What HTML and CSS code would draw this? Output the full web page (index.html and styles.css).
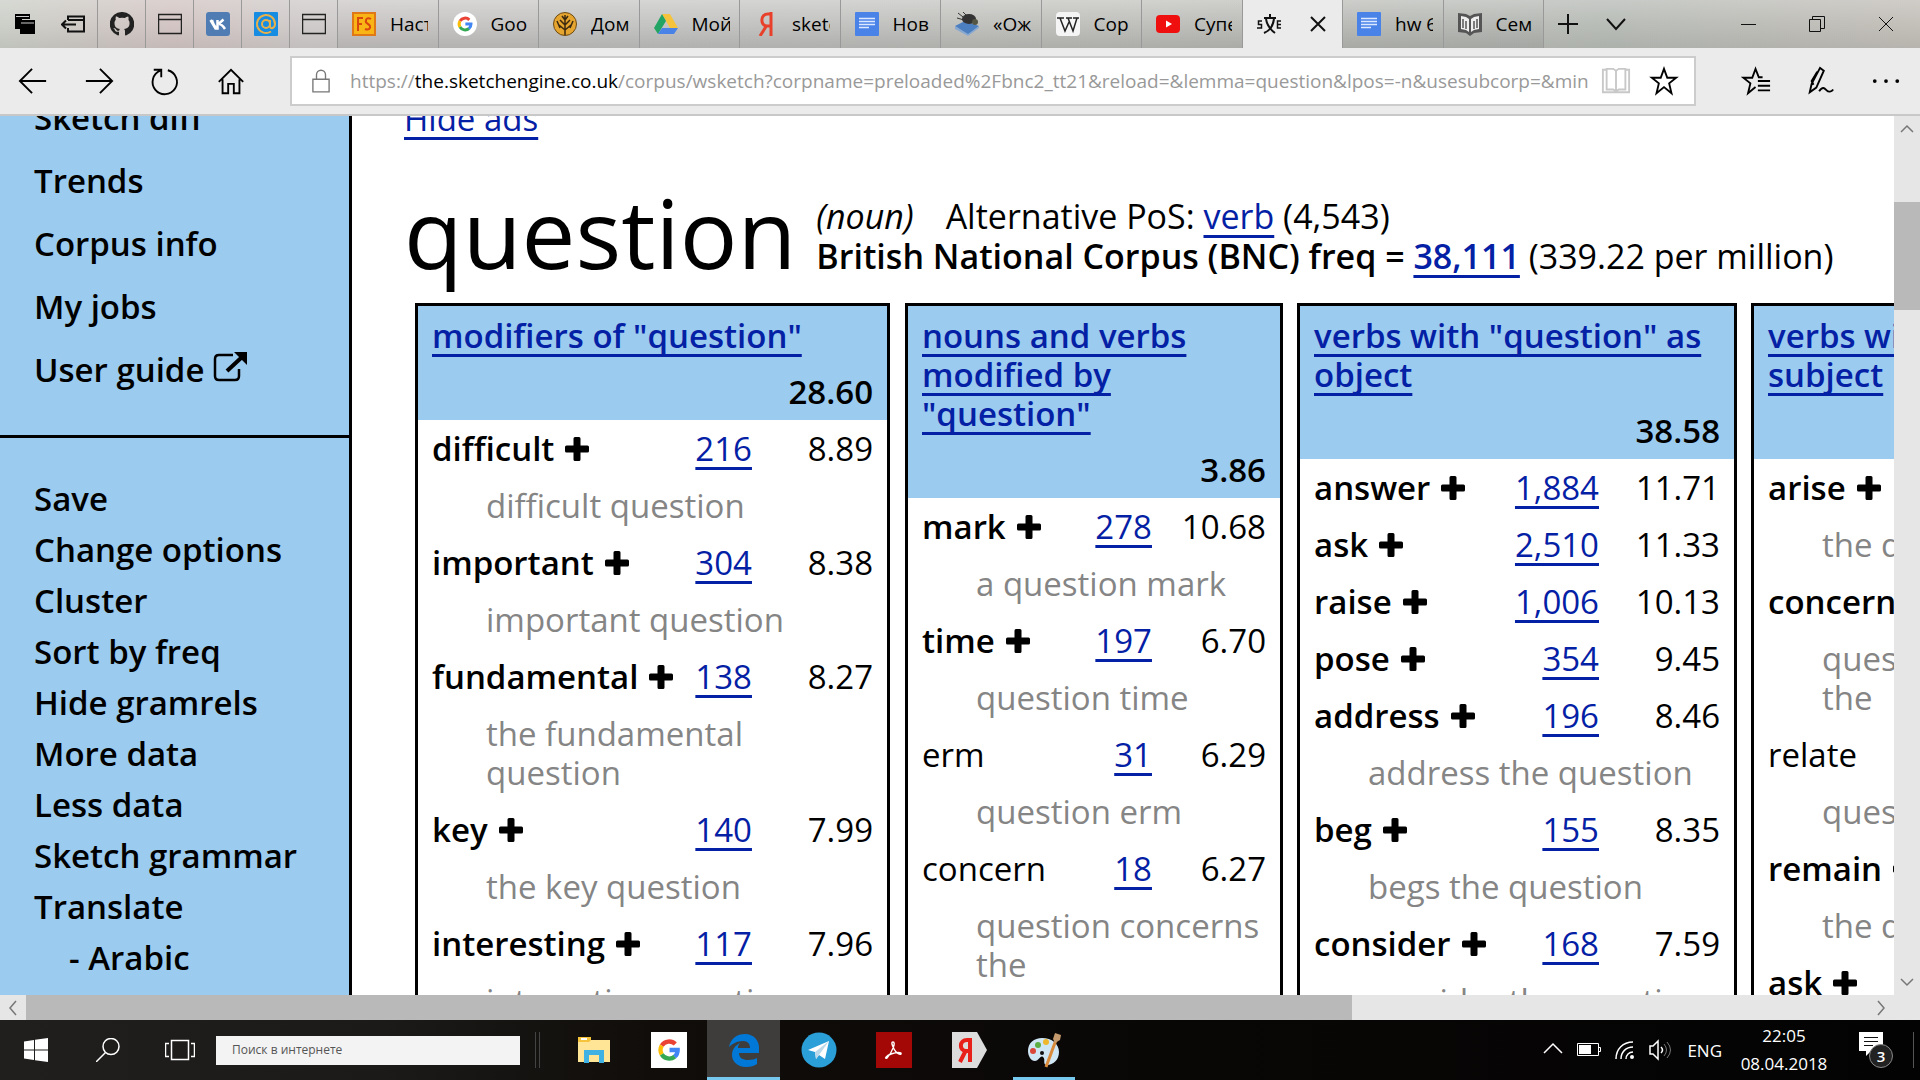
FILE: index.html
```html
<!DOCTYPE html>
<html lang="en">
<head>
<meta charset="utf-8">
<title>Word sketch: question</title>
<link rel="stylesheet" href="styles.css">
</head>
<body>
<svg class="defs" aria-hidden="true">
  <symbol id="plus" viewBox="0 0 24 24"><path d="M8.500 1.500q0-1.500 1.500-1.500h4q1.500 0 1.500 1.500V8.500h7q1.500 0 1.500 1.500v4q0 1.500-1.500 1.500h-7v7q0 1.500-1.500 1.500h-4Q8.500 24 8.500 22.500v-7h-7Q0 15.500 0 14v-4Q0 8.500 1.500 8.500h7z"/></symbol>
  <symbol id="window" viewBox="0 0 24 24"><path d="M.5 2.500h23v19H.5zM.5 7.500h23" fill="none" stroke="#222" stroke-width="1.500"/></symbol>
  <symbol id="doc" viewBox="0 0 24 24"><rect width="24" height="24" rx="1" fill="#4a83e8"/><path d="M4 6.500h16M4 9.500h16M4 12.500h16M4 15.500h10" stroke="#dce8ff" stroke-width="1.600"/></symbol>
  <symbol id="google" viewBox="0 0 24 24"><g fill="none" stroke-width="4"><path d="M5.300 8A8 8 0 0 1 17.800 6.500" stroke="#ea4335"/><path d="M5.300 16A8 8 0 0 1 5.300 8" stroke="#fbbc05"/><path d="M17.400 18A8 8 0 0 1 5.300 16" stroke="#34a853"/><path d="M12.500 12h7.500a8 8 0 0 1-2.800 6.200" stroke="#4285f4"/></g></symbol>
</svg>

<header class="tabbar">
  <div class="tabtools">
    <button class="ico" aria-label="Tabs set aside"><svg viewBox="0 0 24 24"><path d="M1 2h15v5H8v10H1z"/><path d="M6 8h15v14H6z"/><path d="M2 4.500h13M7 11h13" stroke="#ccc" stroke-width="1"/></svg></button>
    <button class="ico" aria-label="Set tabs aside"><svg viewBox="0 0 24 24" class="line"><path d="M7 8V4.500h16v15H7V16M7 8h16M15 12.500H1M5 8.500l-4 4 4 4"/></svg></button>
  </div>
  <button class="pin" aria-label="GitHub"><svg viewBox="0 0 24 24"><path fill="#222" d="M12 0a12 12 0 0 0-4 23.400c.7.100 1-.3 1-.7v-3c-3 .6-4-1-4.300-2-.3-.6-1-1.300-1.500-1.600 1.800-.4 2.800 1 3.300 1.800.8 1.100 2 1 2.700.6.100-.8.500-1.300.8-1.500-3-.4-5.500-1.500-5.500-6 0-1.300.5-2.400 1.300-3.200-.3-.9-.3-2 .1-3.200 1.300 0 2.500.7 3.400 1.400a12 12 0 0 1 5.600 0c.9-.7 2.100-1.300 3.300-1.400.5 1.200.5 2.300.2 3.200.8.800 1.200 1.900 1.200 3.200 0 4.500-2.600 5.600-5.500 6 .5.400.9 1.200.9 2.400v3.300c0 .4.300.8 1 .7A12 12 0 0 0 12 0z"/></svg></button>
  <button class="pin" aria-label="Pinned page"><svg><use href="#window"/></svg></button>
  <button class="pin" aria-label="VK"><svg viewBox="0 0 24 24"><rect width="24" height="24" rx="3" fill="#4f7db3"/><path d="M4.500 8l5 8.500h2V8M6 8c1 4 3 7 5 8M12.500 12l5-4.500M13 12c2 0 4 2 6 5" fill="none" stroke="#fff" stroke-width="2.500"/></svg></button>
  <button class="pin" aria-label="Mail"><svg viewBox="0 0 24 24"><rect width="24" height="24" rx="1" fill="#168de2"/><g fill="none" stroke="#e8b04a" stroke-width="2"><circle cx="12" cy="12" r="4"/><path d="M16 8v6c0 4 5 2 5-2a9 9 0 1 0-4 7.500"/></g></svg></button>
  <button class="pin" aria-label="Pinned page"><svg><use href="#window"/></svg></button>
  <div class="tabs">
    <button class="tab"><svg viewBox="0 0 24 24"><rect x="1" y="1" width="22" height="22" fill="#f9b515" stroke="#e07818" stroke-width="2"/><path d="M6 19V6h5M6 12h4M19 7c-5-3-7 3-3 5s2 7-3 5" fill="none" stroke="#d9480f" stroke-width="2"/></svg><span>Наст</span></button>
    <button class="tab"><svg viewBox="0 0 24 24"><circle cx="12" cy="12" r="12" fill="#fff"/><use href="#google" x="3" y="3" width="18" height="18"/></svg><span>Goo</span></button>
    <button class="tab"><svg viewBox="0 0 24 24"><circle cx="12" cy="12" r="11.500" fill="#e5a52e" stroke="#6b4a15"/><path d="M12 23V3M12 18l-6-5M12 18l6-5M12 13L7 8M12 13l5-5M12 8L9 4M12 8l3-4M4 9l3 7M20 9l-3 7" fill="none" stroke="#3c2a10" stroke-width="1.500"/></svg><span>Дом</span></button>
    <button class="tab"><svg viewBox="0 0 24 24"><path d="M8 2h8l8 14h-8z" fill="#f6c33c"/><path d="M8 2l4 7-8 13-4-6z" fill="#21a464"/><path d="M8 16h16l-4 6H4z" fill="#4a83e8"/></svg><span>Мой</span></button>
    <button class="tab"><svg viewBox="0 0 24 24"><path d="M17 0v24M17 2h-3c-8 0-8 12-1 12h4M13 13L6 24" fill="none" stroke="#e8402a" stroke-width="3"/></svg><span>sketc</span></button>
    <button class="tab"><svg><use href="#doc"/></svg><span>Нов</span></button>
    <button class="tab"><svg viewBox="0 0 24 24"><path d="M0 14l10-5 14 5-11 9z" fill="#4b7fc0"/><path d="M0 14v3l13 7 11-8v-2l-11 8z" fill="#88a8cf"/><ellipse cx="14" cy="7" rx="7" ry="5" fill="#333"/><circle cx="20" cy="10" r="3" fill="#554"/><path d="M8 5L3 1M9 8L2 6M11 3L8 0" stroke="#333"/></svg><span>«Ож</span></button>
    <button class="tab"><svg viewBox="0 0 24 24"><rect width="24" height="24" rx="4" fill="#f5f5f5"/><path d="M1 6h7M10 6h6M17 6h6M4 6l5 13 4-9M12 6l5 13 4-13" fill="none" stroke="#222" stroke-width="1.500"/></svg><span>Cop</span></button>
    <button class="tab"><svg viewBox="0 0 24 24"><rect y="3" width="24" height="18" rx="4" fill="#f00f0f"/><path d="M10 8.500v7l6-3.500z" fill="#fff"/></svg><span>Супе</span></button>
    <div class="tab active"><svg viewBox="0 0 24 24" class="line"><path d="M13 2v4M7 6h12M9 7c1 6 5 11 9 14M17 7c-1 7-5 12-10 14" stroke-width="2"/><path d="M5 9H1.500v3.500h3V16H0M24 9h-3.500v7H24M20.500 12.500H24" stroke-width="1.500"/></svg><button class="close" aria-label="Close tab"><svg viewBox="0 0 16 16" class="line"><path d="M1 1l14 14M15 1L1 15"/></svg></button></div>
    <button class="tab"><svg><use href="#doc"/></svg><span>hw 6</span></button>
    <button class="tab"><svg viewBox="0 0 24 24"><path d="M0 1l8 1 4 2 4-2 8-1v19l-8 1-4 3-4-3-8-1z" fill="#555"/><path d="M3 4l5 1 3 2v13l-3-2-5-1zM21 4l-5 1-3 2v13l3-2 5-1z" fill="#eee"/><path d="M5 7v9M8 9v8M16 9v8M19 7v9" stroke="#555" stroke-width="1.500"/></svg><span>Сем</span></button>
  </div>
  <button class="pin plain" aria-label="New tab"><svg viewBox="0 0 24 24" class="line"><path d="M12 2v20M2 12h20"/></svg></button>
  <button class="pin plain" aria-label="Tab previews"><svg viewBox="0 0 24 24" class="line"><path d="M3 7l9 10 9-10"/></svg></button>
  <div class="wincontrols">
    <button aria-label="Minimize"><svg viewBox="0 0 16 16" class="thin"><path d="M1 8.500h15"/></svg></button>
    <button aria-label="Restore"><svg viewBox="0 0 16 16" class="thin"><path d="M.5 3.500h11v12H.5zM3.500 3.500v-3h12v12h-4"/></svg></button>
    <button aria-label="Close"><svg viewBox="0 0 16 16" class="thin"><path d="M1 1l14 14M15 1L1 15"/></svg></button>
  </div>
</header>

<nav class="toolbar" aria-label="Browser">
  <button aria-label="Back"><svg viewBox="0 0 32 32" class="nav"><path d="M30 16H2M15 3L2 16l13 13"/></svg></button>
  <button aria-label="Forward"><svg viewBox="0 0 32 32" class="nav"><path d="M2 16h28M17 3l13 13-13 13"/></svg></button>
  <button aria-label="Refresh"><svg viewBox="0 0 32 32" class="nav"><path d="M19 4.500a13 13 0 1 1-8 .5M4 4h8v8"/></svg></button>
  <button aria-label="Home"><svg viewBox="0 0 32 32" class="nav"><path d="M3 17L16 4l13 13M7 14v15h6V19h6v10h6V14"/></svg></button>
  <div class="address">
    <svg class="lock" viewBox="0 0 20 28" aria-hidden="true"><path d="M1 12h18v14H1zM5 12V7a5 5 0 0 1 10 0v5" fill="none" stroke="#777" stroke-width="1.500"/></svg>
    <div class="url" role="textbox" aria-label="Address">https://<b>the.sketchengine.co.uk</b>/corpus/wsketch?corpname=preloaded%2Fbnc2_tt21&amp;reload=&amp;lemma=question&amp;lpos=-n&amp;usesubcorp=&amp;minfr</div>
    <button aria-label="Reading view"><svg viewBox="0 0 32 32"><path d="M2 4h4v-1h7l3 2 3-2h7v1h4v24H2zM6 4v21h7l3 2 3-2h7V4M16 5v22" fill="none" stroke="#c8c8c8" stroke-width="2"/></svg></button>
    <button aria-label="Add to favorites"><svg viewBox="0 0 32 32" class="nav"><path d="M16 3l3.500 9.500H29l-7.500 6L24 29l-8-6.500L8 29l2.500-10.500-7.500-6h9.500z"/></svg></button>
  </div>
  <div class="actions">
    <button aria-label="Hub"><svg viewBox="0 0 32 32" class="nav"><path d="M23 12h-4L15.500 3 12 12.500H2.500l7.500 6L7.500 29l8-6.500M18 16h13M18 21h13M18 26h13"/></svg></button>
    <button aria-label="Notes"><svg viewBox="0 0 32 32" class="nav"><path d="M4 28l2-9L15 2l4 3-8 18zM8 20l-2-4 6-10M14 27c4-6 6-3 8-1s5 2 7-1"/></svg></button>
    <button aria-label="More"><svg viewBox="0 0 32 32"><circle cx="4" cy="16" r="2"/><circle cx="16" cy="16" r="2"/><circle cx="28" cy="16" r="2"/></svg></button>
  </div>
</nav>

<div class="viewport">
  <div class="page">
    <aside class="sidebar">
      <ul class="menu tall">
        <li><a href="#">Sketch diff</a></li>
        <li><a href="#">Trends</a></li>
        <li><a href="#">Corpus info</a></li>
        <li><a href="#">My jobs</a></li>
        <li><a href="#">User guide <svg class="ext" viewBox="0 0 34 30"><path d="M20 3H6Q2 3 2 7v17q0 4 4 4h16q4 0 4-4v-7" fill="none" stroke="#000" stroke-width="2.500"/><path d="M14 19L28 6" stroke="#000" stroke-width="4"/><path d="M21 0h13v13z"/></svg></a></li>
      </ul>
      <ul class="menu">
        <li><a href="#">Save</a></li>
        <li><a href="#">Change options</a></li>
        <li><a href="#">Cluster</a></li>
        <li><a href="#">Sort by freq</a></li>
        <li><a href="#">Hide gramrels</a></li>
        <li><a href="#">More data</a></li>
        <li><a href="#">Less data</a></li>
        <li><a href="#">Sketch grammar</a></li>
        <li><a href="#">Translate</a></li>
        <li class="sub"><a href="#">- Arabic</a></li>
      </ul>
    </aside>
    <main class="content">
      <a class="hide" href="#">Hide ads</a>
      <div class="lemma">
        <h1>question</h1>
        <p><i>(noun)</i><span class="alt">Alternative PoS: <a href="#">verb</a> (4,543)</span><br>
        <b>British National Corpus (BNC) freq = <a href="#">38,111</a></b> (339.22 per million)</p>
      </div>
      <div class="sketches">
        <table class="w1">
          <colgroup><col><col class="freq"><col class="score"></colgroup>
          <thead><tr><th colspan="3"><a href="#">modifiers of "question"</a></th></tr><tr><td colspan="3">28.60</td></tr></thead>
          <tbody>
          <tr><td><b>difficult</b><svg><use href="#plus"/></svg></td><td><a href="#">216</a></td><td>8.89</td></tr>
          <tr class="ex"><td colspan="3">difficult question</td></tr>
          <tr><td><b>important</b><svg><use href="#plus"/></svg></td><td><a href="#">304</a></td><td>8.38</td></tr>
          <tr class="ex"><td colspan="3">important question</td></tr>
          <tr><td><b>fundamental</b><svg><use href="#plus"/></svg></td><td><a href="#">138</a></td><td>8.27</td></tr>
          <tr class="ex"><td colspan="3">the fundamental<br>question</td></tr>
          <tr><td><b>key</b><svg><use href="#plus"/></svg></td><td><a href="#">140</a></td><td>7.99</td></tr>
          <tr class="ex"><td colspan="3">the key question</td></tr>
          <tr><td><b>interesting</b><svg><use href="#plus"/></svg></td><td><a href="#">117</a></td><td>7.96</td></tr>
          <tr class="ex"><td colspan="3">interesting question</td></tr>
          </tbody>
        </table>
        <table class="w2">
          <colgroup><col><col class="freq"><col class="score"></colgroup>
          <thead><tr><th colspan="3"><a href="#">nouns and verbs<br>modified by<br>"question"</a></th></tr><tr><td colspan="3">3.86</td></tr></thead>
          <tbody>
          <tr><td><b>mark</b><svg><use href="#plus"/></svg></td><td><a href="#">278</a></td><td>10.68</td></tr>
          <tr class="ex"><td colspan="3">a question mark</td></tr>
          <tr><td><b>time</b><svg><use href="#plus"/></svg></td><td><a href="#">197</a></td><td>6.70</td></tr>
          <tr class="ex"><td colspan="3">question time</td></tr>
          <tr><td>erm</td><td><a href="#">31</a></td><td>6.29</td></tr>
          <tr class="ex"><td colspan="3">question erm</td></tr>
          <tr><td>concern</td><td><a href="#">18</a></td><td>6.27</td></tr>
          <tr class="ex"><td colspan="3">question concerns<br>the</td></tr>
          <tr><td colspan="3">&nbsp;</td></tr>
          </tbody>
        </table>
        <table class="w3">
          <colgroup><col><col class="freq"><col class="score"></colgroup>
          <thead><tr><th colspan="3"><a href="#">verbs with "question" as<br>object</a></th></tr><tr><td colspan="3">38.58</td></tr></thead>
          <tbody>
          <tr><td><b>answer</b><svg><use href="#plus"/></svg></td><td><a href="#">1,884</a></td><td>11.71</td></tr>
          <tr><td><b>ask</b><svg><use href="#plus"/></svg></td><td><a href="#">2,510</a></td><td>11.33</td></tr>
          <tr><td><b>raise</b><svg><use href="#plus"/></svg></td><td><a href="#">1,006</a></td><td>10.13</td></tr>
          <tr><td><b>pose</b><svg><use href="#plus"/></svg></td><td><a href="#">354</a></td><td>9.45</td></tr>
          <tr><td><b>address</b><svg><use href="#plus"/></svg></td><td><a href="#">196</a></td><td>8.46</td></tr>
          <tr class="ex"><td colspan="3">address the question</td></tr>
          <tr><td><b>beg</b><svg><use href="#plus"/></svg></td><td><a href="#">155</a></td><td>8.35</td></tr>
          <tr class="ex"><td colspan="3">begs the question</td></tr>
          <tr><td><b>consider</b><svg><use href="#plus"/></svg></td><td><a href="#">168</a></td><td>7.59</td></tr>
          <tr class="ex"><td colspan="3">consider the question</td></tr>
          </tbody>
        </table>
        <table class="w3">
          <colgroup><col><col class="freq"><col class="score"></colgroup>
          <thead><tr><th colspan="3"><a href="#">verbs with "question" as<br>subject</a></th></tr><tr><td colspan="3">&nbsp;</td></tr></thead>
          <tbody>
          <tr><td><b>arise</b><svg><use href="#plus"/></svg></td><td></td><td></td></tr>
          <tr class="ex"><td colspan="3">the question</td></tr>
          <tr><td><b>concern</b><svg><use href="#plus"/></svg></td><td></td><td></td></tr>
          <tr class="ex"><td colspan="3">question<br>the</td></tr>
          <tr><td>relate</td><td></td><td></td></tr>
          <tr class="ex"><td colspan="3">question</td></tr>
          <tr><td><b>remain</b><svg><use href="#plus"/></svg></td><td></td><td></td></tr>
          <tr class="ex"><td colspan="3">the question</td></tr>
          <tr><td><b>ask</b><svg><use href="#plus"/></svg></td><td></td><td></td></tr>
          </tbody>
        </table>
      </div>
    </main>
  </div>
  <div class="vscroll">
    <button aria-label="Scroll up"><svg viewBox="0 0 16 16"><path d="M2 11l6-6 6 6"/></svg></button>
    <div class="track"><div class="thumb"></div></div>
    <button aria-label="Scroll down"><svg viewBox="0 0 16 16"><path d="M2 5l6 6 6-6"/></svg></button>
  </div>
</div>
<div class="hscroll">
  <button aria-label="Scroll left"><svg viewBox="0 0 16 16"><path d="M11 1L5 8l6 7"/></svg></button>
  <div class="track"><div class="thumb"></div></div>
  <button aria-label="Scroll right"><svg viewBox="0 0 16 16"><path d="M5 1l6 7-6 7"/></svg></button>
</div>

<footer class="taskbar">
  <button class="sys" aria-label="Start"><svg viewBox="0 0 24 24"><path d="M0 3.500L10 2v9.500H0zM11 1.800L24 0v11.500H11zM0 12.500h10V22L0 20.500zM11 12.500h13V24l-13-1.800z" fill="#fff"/></svg></button>
  <button class="sys" aria-label="Search"><svg viewBox="0 0 24 24" class="white"><circle cx="15" cy="8.500" r="8"/><path d="M9.500 14.500L0 24"/></svg></button>
  <button class="sys" aria-label="Task view"><svg class="wide" viewBox="0 0 30 24" ><g class="white"><path d="M6.500 2.500h17v19h-17zM4 5.500H.5v13H4M26 5.500h3.500v13H26"/></g></svg></button>
  <input class="search" type="text" placeholder="Поиск в интернете" aria-label="Поиск в интернете">
  <i class="grip"></i>
  <div class="apps">
    <button aria-label="Explorer"><svg viewBox="0 0 36 36"><path d="M2 5h13v3h19v22H2z" fill="#ffe595"/><path d="M2 5h13v3l-2 2H2z" fill="#f6c33c"/><path d="M5 6h6v2H5z" fill="#fff"/><path d="M8 31V18h20v13h-5v-8H13v8z" fill="#3fb1e3"/></svg></button>
    <button aria-label="Google"><svg viewBox="0 0 36 36"><rect width="36" height="36" fill="#fff"/><use href="#google" x="5" y="5" width="26" height="26"/></svg></button>
    <button class="on" aria-label="Edge"><svg viewBox="0 0 36 36"><path d="M3 15C5 6 11 2 19 2c9 0 14 7 14 13v6H13c0 5 4 7 9 7 4 0 7-1 9-2v6c-3 2-6 3-11 3C11 35 6 29 6 23c0-6 4-10 8-12-2 2-2 4-2 5h12c0-4-2-7-7-7-6 0-11 3-14 6z" fill="#0078d7"/></svg></button>
    <button aria-label="Telegram"><svg viewBox="0 0 36 36"><circle cx="18" cy="18" r="17.500" fill="#2a9fd8"/><path d="M7 18L28 9l-4 18-6-4-3 4-1-7z" fill="#fff"/><path d="M14 20L28 9 18 23l-3 4z" fill="#bcd9ea"/></svg></button>
    <button aria-label="Acrobat"><svg viewBox="0 0 36 36"><rect width="36" height="36" fill="#a30806"/><path d="M17 10c3 0 0 9-6 16-3 1-1-2 4-4 6-2 11-2 10 0-1 1-5-1-7-5s-3-7-1-7z" fill="none" stroke="#fff" stroke-width="1.400"/></svg></button>
    <button aria-label="Yandex"><svg viewBox="0 0 36 36"><path d="M1 0h25l10 18-10 18H1z" fill="#dcdcdc"/><path d="M19 6v24M19 8h-3c-8 0-8 11-1 11h4M15 18L9 30" fill="none" stroke="#e8201a" stroke-width="4"/></svg></button>
    <button class="run" aria-label="Paint"><svg viewBox="0 0 36 36"><path d="M16 6c10 0 17 6 17 14s-6 13-12 13c-5 0-1-6-4-8s-4 4-8 4C5 29 2 24 2 19 2 11 8 6 16 6z" fill="#cfe6f5"/><circle cx="7" cy="19" r="3" fill="#d9473a"/><circle cx="12" cy="13" r="3" fill="#5cae45"/><circle cx="20" cy="10" r="3" fill="#eeb72c"/><circle cx="16" cy="21" r="2" fill="#111"/><path d="M30 8L20 35" stroke="#d98a3a" stroke-width="3"/><path d="M29 1l6 2-1 5-5 3-2-4z" fill="#c59a6c"/></svg></button>
  </div>
  <div class="tray">
    <svg class="t20" viewBox="0 0 20 24"><path class="white" d="M1 15l9-9 9 9"/></svg>
    <svg class="t24" viewBox="0 0 24 24"><path d="M.5 5.500h21v12H.5zM22 9.500h1.500v4H22" fill="none" stroke="#fff"/><path d="M2 7h12v9H2z" fill="#fff"/></svg>
    <svg class="t20" viewBox="0 0 20 24"><path class="white" d="M1 21C1 11 8 4 18 4M6 21c0-7 5-12 12-12M11 21c0-4 3-7 7-7"/><circle cx="17" cy="19" r="2" fill="#fff"/></svg>
    <svg class="t24" viewBox="0 0 24 24"><path class="white" d="M1 8h3l5-5v18l-5-5H1zM12 9q3 3 0 6"/><path d="M15 6q5 6 0 12M18 4q7 8 0 16" fill="none" stroke="#777"/></svg>
    <span class="lang">ENG</span>
    <time datetime="2018-04-08T22:05">22:05<br>08.04.2018</time>
    <div class="notes"><svg viewBox="0 0 24 24"><path d="M0 0h24v19H12l-5 5v-5H0z" fill="#fff"/><path d="M5 5.500h14M5 9.500h14M5 13.500h9" stroke="#111"/></svg><span>3</span></div>
  </div>
</footer>
</body>
</html>
```
FILE: styles.css
```css
* { box-sizing: border-box; }
body {
  margin: 0;
  height: 100vh;
  display: flex;
  flex-direction: column;
  overflow: hidden;
  background: #fff;
  color: #000;
  font-family: "Open Sans", "Noto Sans", sans-serif;
}
button {
  display: flex;
  align-items: center;
  justify-content: center;
  margin: 0;
  padding: 0;
  border: 0;
  background: none;
  color: inherit;
  font: inherit;
}
svg { flex: none; }
.defs { display: none; }
.line { fill: none; stroke: #111; stroke-width: 2; }
.thin { fill: none; stroke: #111; stroke-width: 1; }
.white { fill: none; stroke: #fff; stroke-width: 1.5; }

/* Tab strip */
.tabbar {
  flex: none;
  display: flex;
  height: 48px;
  background:
    linear-gradient(#fff3, #0000 50%, #0001),
    linear-gradient(90deg, #cdd0c9, #d3c6c4 9%, #d0cccb 16%, #cccccb 30%, #c6c6c2 60%, #b9bdb8 84%, #c4c0ba);
}
.tabtools { flex: none; display: flex; width: 98px; padding-left: 2px; border-right: 1px solid #999; }
.tabtools .ico { flex: 1; }
.tabtools svg, .pin svg, .tab > svg { width: 24px; height: 24px; }
.pin { flex: none; width: 48px; border-right: 1px solid #999; }
.pin.plain { border: 0; }
.tabs { display: flex; width: 1206px; }
.tab {
  flex: 1 1 0;
  min-width: 0;
  display: flex;
  align-items: center;
  justify-content: flex-start;
  gap: 14px;
  padding-left: 14px;
  border-right: 1px solid #999;
  background: linear-gradient(#0000, #0001);
}
.tab span {
  width: 38px;
  overflow: hidden;
  text-align: left;
  white-space: nowrap;
  font-size: 19px;
  line-height: 30px;
}
.tab.active { background: #ebebeb; }
.close { width: 48px; }
.close svg { width: 16px; height: 16px; }
.wincontrols { display: flex; margin-left: auto; }
.wincontrols button { width: 69px; }
.wincontrols svg { width: 16px; height: 16px; }

/* Address row */
.toolbar {
  flex: none;
  display: flex;
  align-items: center;
  height: 68px;
  border-bottom: 2px solid #c8c8c8;
  background: #ebebeb;
}
.toolbar > button { width: 66px; height: 64px; }
.toolbar button svg { width: 30px; height: 30px; }
.nav { fill: none; stroke: #000; stroke-width: 2; }
.address {
  flex: 1;
  min-width: 0;
  display: flex;
  align-items: center;
  height: 50px;
  margin-left: 26px;
  border: 2px solid #ccc;
  background: #fff;
}
.lock { width: 18px; height: 28px; margin: 0 20px; }
.url {
  flex: 1;
  min-width: 0;
  overflow: hidden;
  white-space: nowrap;
  color: #999;
  font-size: 19px;
  line-height: 32px;
}
.url b { color: #000; font-weight: 400; }
.address button { width: 48px; margin-left: 4px; }
.address button + button { margin-left: 0; margin-right: 6px; }
.actions { display: flex; margin: 0 2px 0 27px; }
.actions button { width: 65px; }

/* Page */
.viewport { flex: 1; min-height: 0; display: flex; }
.page { flex: 1; min-width: 0; display: flex; overflow: hidden; }
.sidebar {
  flex: none;
  width: 352px;
  border-right: 3px solid #000;
  background: #9bcbef;
  font-size: 33px;
  font-weight: 600;
}
.sidebar a { color: #000; text-decoration: none; }
.menu { margin: 0; padding: 35px 0 0 34px; list-style: none; line-height: 51px; }
.menu.tall {
  margin-top: -30px;
  padding: 0 0 34px 34px;
  border-bottom: 3px solid #000;
  line-height: 63px;
}
.sub { padding-left: 35px; }
.ext { width: 34px; height: 30px; }
.content {
  flex: 1;
  min-width: 0;
  margin-top: -17px;
  padding-left: 52px;
  font-size: 33px;
  line-height: 39px;
}
.content a {
  color: #0420a5;
  text-decoration: underline 3px;
  text-underline-offset: 6px;
  text-decoration-skip-ink: none;
}
.content b { font-weight: 600; }
.hide { display: block; width: max-content; }
.lemma { display: flex; gap: 20px; align-items: flex-end; white-space: nowrap; }
h1 { margin: 0; padding-top: 28px; font-size: 96px; font-weight: 400; line-height: 132px; }
.lemma p { margin: 0 0 22px; font-size: 34px; line-height: 40px; }
.alt { margin-left: 32px; }
.sketches { display: flex; align-items: flex-start; gap: 14px; padding-left: 11px; margin-top: 5px; }
table {
  flex: none;
  border: 3px solid #000;
  border-spacing: 0;
  table-layout: fixed;
}
.w1 { width: 475px; }
.w2 { width: 378px; }
.w3 { width: 440px; }
.w1 + .w2 { margin-left: 1px; }
.freq { width: 90px; }
.score { width: 135px; }
.w2 .score { width: 128px; }
thead { background: #9bcbef; }
td, th { padding: 9px 14px; vertical-align: top; white-space: nowrap; }
th { padding: 10px 14px 8px; text-align: left; font-weight: 600; }
thead td { text-align: right; font-weight: 600; }
tbody td + td { padding-left: 0; text-align: right; }
tbody td:nth-child(2) { padding-right: 0; }
tbody td svg { width: 24px; height: 24px; margin-left: 11px; }
tbody td:first-child { padding-right: 0; }
tbody .ex td { padding-left: 68px; color: #858585; }

/* Scroll bars */
.vscroll { flex: none; display: flex; flex-direction: column; width: 26px; background: #e6e6e6; }
.vscroll button { height: 26px; }
.vscroll .track, .hscroll .track { flex: 1; }
.vscroll .thumb { height: 13%; margin-top: 60px; background: #b9b9b9; }
.hscroll { flex: none; display: flex; height: 25px; padding-right: 26px; background: #e6e6e6; }
.hscroll button { width: 26px; }
.hscroll .thumb { width: 72%; height: 100%; background: #b9b9b9; }
.vscroll svg, .hscroll svg { width: 16px; height: 16px; fill: none; stroke: #777; stroke-width: 1.5; }

/* Taskbar */
.taskbar {
  flex: none;
  display: flex;
  align-items: center;
  height: 60px;
  background: linear-gradient(90deg, #201f1e, #1b1a18 20%, #100d0a 34%, #090706 60%, #030303);
  color: #fff;
}
.sys { width: 72px; height: 60px; }
.sys svg { width: 24px; height: 24px; }
.sys .wide { width: 30px; }
.search {
  width: 304px;
  height: 29px;
  padding: 0 16px 2px;
  border: 0;
  background: #f3f3f3;
  font: 12px "Open Sans", sans-serif;
}
.search::placeholder { color: #555; opacity: 1; }
.grip { width: 5px; height: 36px; margin-left: 15px; border: solid #444; border-width: 0 1px; }
.apps { display: flex; gap: 2px; margin-left: 17px; }
.apps button { width: 73px; height: 60px; border-bottom: 3px solid #0000; padding-top: 3px; }
.apps svg { width: 36px; height: 36px; }
.apps .on { background: #3f3d3b; border-color: #76c8ee; }
.apps .run { width: 62px; margin-left: 6px; border-color: #76c8ee; }
.tray { display: flex; align-items: center; gap: 14px; margin-left: auto; padding-right: 6px; }
.t20 { width: 20px; height: 24px; }
.t24 { width: 24px; height: 24px; }
.lang { font-size: 17px; }
.tray time { width: 96px; text-align: center; font-size: 17px; line-height: 28px; }
.notes { position: relative; width: 68px; height: 36px; padding-left: 13px; border-right: 1px solid #555; }
.notes svg { width: 24px; height: 24px; }
.notes span {
  position: absolute;
  right: 20px;
  top: 12px;
  width: 24px;
  height: 24px;
  border: 1px solid #888;
  border-radius: 50%;
  background: #222;
  text-align: center;
  font-size: 15px;
  font-weight: 600;
  line-height: 22px;
}
```
